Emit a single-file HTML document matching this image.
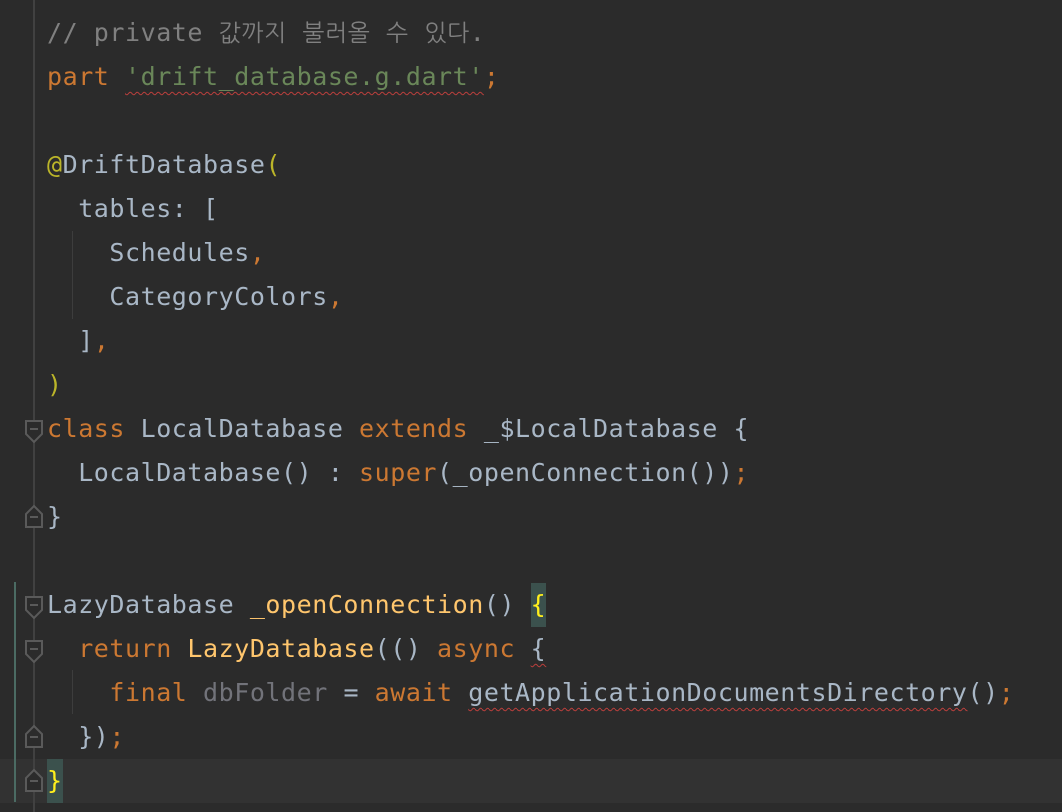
<!DOCTYPE html>
<html><head><meta charset="utf-8"><style>
html,body{margin:0;padding:0;background:#2b2b2b;width:1062px;height:812px;overflow:hidden}
.ed{position:relative;width:1062px;height:812px;font-family:"DejaVu Sans Mono","Liberation Mono","NanumGothic","Noto Sans CJK KR",monospace;font-size:25px;letter-spacing:0.55px;color:#a9b7c6}
.l{position:absolute;left:47px;height:44px;line-height:44px;white-space:pre}
.c{color:#808080}.k{color:#cc7832}.s{color:#6a8759}.a{color:#bbb529}.f{color:#ffc66d}.u{color:#72737a}
.ko{font-family:"NanumGothic","Noto Sans CJK KR",sans-serif;font-size:23.5px;letter-spacing:0.6px}
.w{text-decoration:underline wavy #bc3f3c;text-decoration-thickness:1px;text-underline-offset:6px}
.hb{display:inline-block;height:44px;vertical-align:top;background:#3b514d;color:#ffef1c}
</style></head><body><div class="ed">
<div style="position:absolute;left:0;top:759px;width:1062px;height:44px;background:#323232"></div>
<div style="position:absolute;left:33px;top:0;width:2px;height:812px;background:#414141"></div>
<div style="position:absolute;left:14px;top:582px;width:2px;height:220px;background:#4b6b63"></div>
<div style="position:absolute;left:72px;top:231px;width:1px;height:88px;background:#3d3d3d"></div>
<div style="position:absolute;left:72px;top:670px;width:1px;height:44px;background:#3d3d3d"></div>
<svg style="position:absolute;left:0;top:0" width="60" height="812">
<g fill="#2b2b2b" stroke="#5a5a5a" stroke-width="2">
<path d="M26 421h16v13l-8 8l-8-8z"/><path d="M30 429h8"/>
<path d="M26 597h16v13l-8 8l-8-8z"/><path d="M30 605h8"/>
<path d="M26 641h16v13l-8 8l-8-8z"/><path d="M30 649h8"/>
<path d="M26 527h16v-13l-8-8l-8 8z"/><path d="M30 517h8"/>
<path d="M26 747h16v-13l-8-8l-8 8z"/><path d="M30 737h8"/>
<path d="M26 791h16v-13l-8-8l-8 8z"/><path d="M30 781h8"/>
</g></svg>
<div class="l" style="top:11px"><span class="c">// private <span class="ko">값까지</span> <span class="ko">불러올</span> <span class="ko">수</span> <span class="ko">있다</span>.</span></div>
<div class="l" style="top:55px"><span class="k">part </span><span class="s w">'drift_database.g.dart'</span><span class="k">;</span></div>
<div class="l" style="top:143px"><span class="a">@</span>DriftDatabase<span class="a">(</span></div>
<div class="l" style="top:187px">  tables: [</div>
<div class="l" style="top:231px">    Schedules<span class="k">,</span></div>
<div class="l" style="top:275px">    CategoryColors<span class="k">,</span></div>
<div class="l" style="top:319px">  ]<span class="k">,</span></div>
<div class="l" style="top:363px"><span class="a">)</span></div>
<div class="l" style="top:407px"><span class="k">class </span>LocalDatabase <span class="k">extends </span>_$LocalDatabase {</div>
<div class="l" style="top:451px">  LocalDatabase() : <span class="k">super</span>(_openConnection())<span class="k">;</span></div>
<div class="l" style="top:495px">}</div>
<div class="l" style="top:583px">LazyDatabase <span class="f">_openConnection</span>() <span class="hb">{</span></div>
<div class="l" style="top:627px">  <span class="k">return </span><span class="f">LazyDatabase</span>(() <span class="k">async </span><span class="w">{</span></div>
<div class="l" style="top:671px">    <span class="k">final </span><span class="u">dbFolder </span>= <span class="k">await </span><span class="w">getApplicationDocumentsDirectory</span>()<span class="k">;</span></div>
<div class="l" style="top:715px">  })<span class="k">;</span></div>
<div class="l" style="top:759px"><span class="hb">}</span></div>
</div></body></html>
